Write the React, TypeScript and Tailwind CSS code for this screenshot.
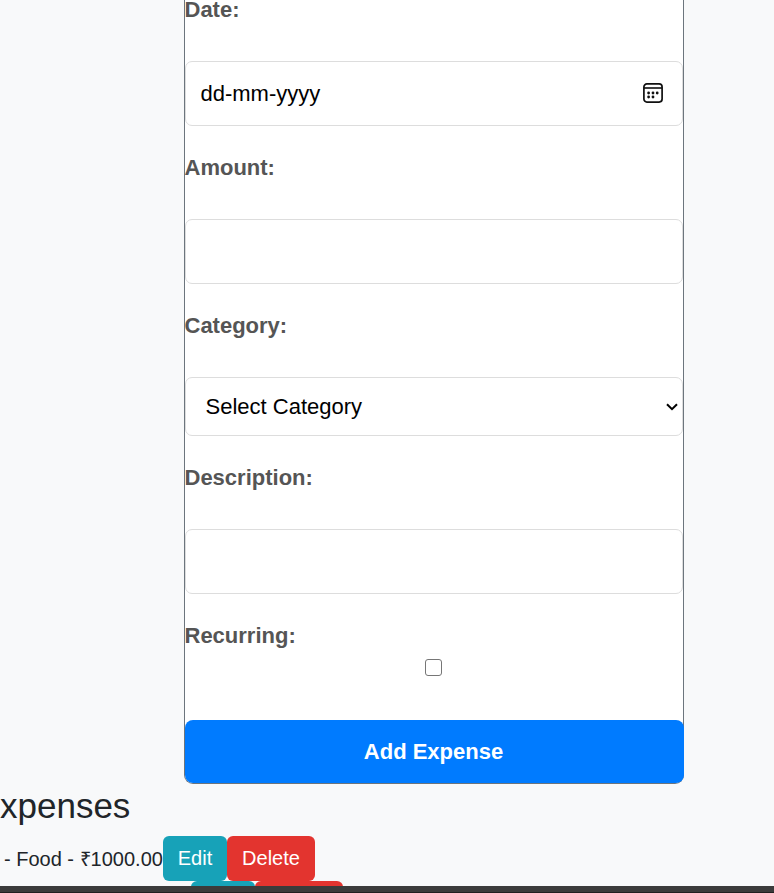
import type { ReactNode } from "react";

function Field({ label, first = false, children }: { label: string; first?: boolean; children: ReactNode }) {
  return (
    <div className="flex flex-col">
      <label
        className={`${first ? "h-[61px] leading-[19px]" : "h-[93px] pt-[25px] leading-[33px]"} text-[22px] font-bold text-[#555555]`}
      >
        <span className="-ml-[0.5px]">{label}</span>
      </label>
      {children}
    </div>
  );
}

function CalendarIcon() {
  return (
    <svg className="mb-[2px]" width="20" height="20" viewBox="0 0 20 20" fill="none" aria-hidden="true">
      <rect x="0.9" y="0.9" width="18.2" height="18.2" rx="3" stroke="#101010" strokeWidth="1.7" />
      <path d="M1 5h18" stroke="#101010" strokeWidth="1.6" />
      <g fill="#101010">
        <circle cx="5.6" cy="10" r="1.4" />
        <circle cx="10" cy="10" r="1.4" />
        <circle cx="14.2" cy="10" r="1.4" />
        <circle cx="5.6" cy="14" r="1.4" />
        <circle cx="10" cy="14" r="1.4" />
      </g>
    </svg>
  );
}

export default function App() {
  return (
    <div className="flex h-[893px] w-[774px] flex-col overflow-hidden bg-[#f8f9fa] font-['Liberation_Sans',Arial,sans-serif] text-[#212529]">
      <form className="ml-[184px] flex h-[784px] w-[500px] shrink-0 flex-col rounded-b-[9px] border border-t-0 border-[#6c757d] bg-white">
        <Field label="Date:" first>
          <div className="flex h-[65px] items-center justify-between rounded-[7px] border border-[#dddddd] pr-[19px] pl-[14.5px] text-[22px] text-black">
            <span>dd-mm-yyyy</span>
            <CalendarIcon />
          </div>
        </Field>
        <Field label="Amount:">
          <input aria-label="Amount" className="h-[65px] rounded-[7px] border border-[#dddddd] bg-white px-[15px] text-[22px]" />
        </Field>
        <Field label="Category:">
          <div className="flex h-[59px] items-center justify-between rounded-[7px] border border-[#dddddd] pr-[4px] pl-[19.5px] text-[22px] text-black">
            <span>Select Category</span>
            <svg width="12" height="8" viewBox="0 0 12 8" fill="none" aria-hidden="true">
              <path d="M1 1.2l5 5 5-5" stroke="#000000" strokeWidth="2" />
            </svg>
          </div>
        </Field>
        <Field label="Description:">
          <input aria-label="Description" className="h-[65px] rounded-[7px] border border-[#dddddd] bg-white px-[15px] text-[22px]" />
        </Field>
        <div className="flex h-[126px] flex-col pt-[25px]">
          <label className="text-[22px] leading-[33px] font-bold text-[#555555]">
            <span className="-ml-[0.5px]">Recurring:</span>
          </label>
          <input
            type="checkbox"
            aria-label="Recurring"
            className="mt-[7px] mr-px size-[17px] appearance-none self-center rounded-[3px] border border-[#767676] bg-white"
          />
        </div>
        <button type="button" className="-mx-[0.5px] h-[63px] rounded-[8px] bg-[#007bff] pr-px text-[22px] font-bold text-white">
          Add Expense
        </button>
      </form>
      <h2 className="h-[52px] shrink-0 text-[35px] leading-[43px]">xpenses</h2>
      <div className="flex h-[45px] shrink-0 items-center text-[20px]">
        <span className="w-[163px] pl-[4px] whitespace-nowrap">- Food - ₹1000.00</span>
        <button type="button" className="h-[45px] w-[64px] rounded-[6px] bg-[#17a2b8] pb-[2px] text-white">Edit</button>
        <button type="button" className="h-[45px] w-[88px] rounded-[6px] bg-[#e3342f] pb-[2px] text-white">Delete</button>
      </div>
      <div className="flex h-[5px] shrink-0 overflow-hidden pl-[191px]">
        <div className="h-[45px] w-[64px] rounded-[6px] bg-[#17a2b8]" />
        <div className="h-[45px] w-[88px] rounded-[6px] bg-[#e3342f]" />
      </div>
      <div className="h-[7px] shrink-0 border-b border-[#202020] bg-[#3b3b3b]" />
    </div>
  );
}
